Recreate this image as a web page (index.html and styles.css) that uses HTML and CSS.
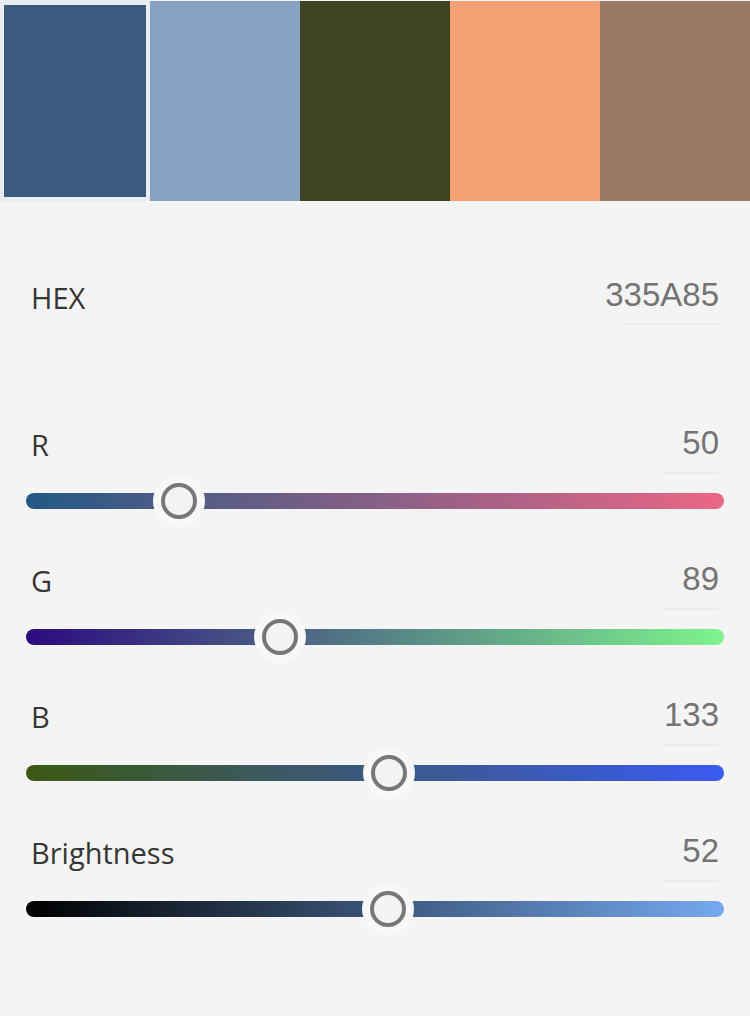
FILE: index.html
```html
<!DOCTYPE html>
<html lang="en">
<head>
    <meta charset="UTF-8">
    <meta name="viewport" content="width=device-width, initial-scale=1.0">
    <title>Color Picker</title>
    <link rel="stylesheet" href="styles.css">
</head>
<body>
    <!-- swatch strip -->
    <div class="swatches">
        <div class="swatch selected" style="background-color: #3b5a80;"></div>
        <div class="swatch" style="background-color: #87a3c1;"></div>
        <div class="swatch" style="background-color: #3f4223;"></div>
        <div class="swatch" style="background-color: #f2a275;"></div>
        <div class="swatch" style="background-color: #9c7867;"></div>
    </div>

    <div class="controls">
        <div class="param hex-row">
            <div class="param-head">
                <span class="label">HEX</span>
                <div class="value wide"><span>335A85</span></div>
            </div>
        </div>

        <div class="param">
            <div class="param-head">
                <span class="label">R</span>
                <div class="value"><span>50</span></div>
            </div>
            <div class="track track-r">
                <div class="thumb" style="left: 153px;"></div>
            </div>
        </div>

        <div class="param">
            <div class="param-head">
                <span class="label">G</span>
                <div class="value"><span>89</span></div>
            </div>
            <div class="track track-g">
                <div class="thumb" style="left: 254px;"></div>
            </div>
        </div>

        <div class="param">
            <div class="param-head">
                <span class="label">B</span>
                <div class="value"><span>133</span></div>
            </div>
            <div class="track track-b">
                <div class="thumb" style="left: 363px;"></div>
            </div>
        </div>

        <div class="param">
            <div class="param-head">
                <span class="label">Brightness</span>
                <div class="value"><span>52</span></div>
            </div>
            <div class="track track-br">
                <div class="thumb" style="left: 362px;"></div>
            </div>
        </div>
    </div>
</body>
</html>
```

FILE: styles.css
```css
body {
    margin: 0;
    padding: 0;
    background-color: #f4f4f4;
    font-family: "Open Sans", "Noto Sans", sans-serif;
    height: 1016px;
    overflow: hidden;
}

.swatches {
    display: flex;
    height: 200px;
    padding-top: 1px;
}

.swatch {
    flex: 0 0 150px;
    height: 200px;
}

.swatch.selected {
    box-sizing: border-box;
    height: 201px;
    margin-top: -1px;
    border: 4px solid #e9ecf1;
    border-top-width: 5px;
}

.controls {
    padding: 0 26px;
}

.param {
    margin-top: 52px;
}

.param.hex-row {
    margin-top: 76px;
    margin-bottom: 100px;
}

.param-head {
    display: flex;
    justify-content: space-between;
    align-items: flex-end;
    padding: 0 5px;
}

.label {
    font-size: 29px;
    line-height: 36px;
    color: #363636;
    margin-bottom: 11px;
}

.hex-row .label {
    margin-bottom: 9px;
}

.value {
    display: flex;
    justify-content: flex-end;
    width: 55px;
    padding-bottom: 11px;
    border-bottom: 2px solid #ebebeb;
    font-family: "Liberation Sans", Arial, sans-serif;
    font-size: 33px;
    line-height: 36px;
    color: #747474;
    white-space: nowrap;
}

.value.wide {
    width: 97px;
    padding-bottom: 10px;
}

.track {
    position: relative;
    height: 16px;
    margin-top: 19px;
    border-radius: 8px;
}

.track-r {
    background-image: linear-gradient(to right, #225985, #ec6686);
}

.track-g {
    background-image: linear-gradient(to right, #2c0a80, #7ef48c);
}

.track-b {
    background-image: linear-gradient(to right, #3b5912, #3b5af2);
}

.track-br {
    background-image: linear-gradient(to right, #000000, #75a9f0);
}

.thumb {
    position: absolute;
    top: 50%;
    width: 52px;
    height: 52px;
    margin: -26px 0 0 -26px;
    border-radius: 50%;
    background-color: #f8f8f8;
}

.thumb::after {
    content: "";
    position: absolute;
    left: 8px;
    top: 8px;
    width: 28px;
    height: 28px;
    border: 4px solid #777777;
    border-radius: 50%;
    background-color: #f4f4f4;
}
```
